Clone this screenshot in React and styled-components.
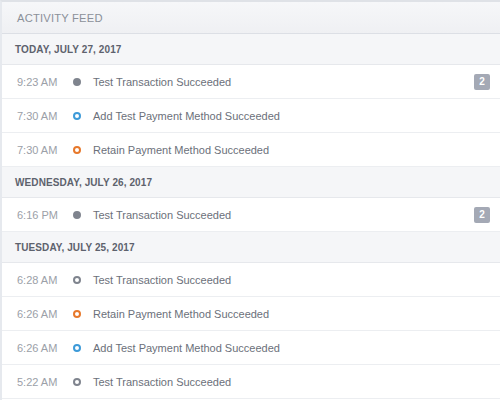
import styled, { createGlobalStyle, css } from "styled-components";

const GlobalStyle = createGlobalStyle`
  html, body {
    margin: 0;
    padding: 0;
    background: #ffffff;
  }
  body {
    font-family: "Liberation Sans", Arial, sans-serif;
    -webkit-font-smoothing: antialiased;
  }
`;

const Panel = styled.div`
  position: relative;
  width: 500px;
  height: 400px;
  overflow: hidden;
  border-top: 2px solid #dfe2e7;
  border-left: 2px solid #e6e9ee;
  box-sizing: border-box;
  background: #ffffff;
`;

const ActiveMarker = styled.span`
  position: absolute;
  left: -2px;
  top: 144px;
  width: 2px;
  height: 24px;
  background: #3f9be0;
`;

const Header = styled.div`
  height: 32px;
  display: flex;
  align-items: center;
  padding-left: 15px;
  background: linear-gradient(#f6f7f9, #eff0f3);
  border-bottom: 1px solid #dcdfe5;
  box-sizing: border-box;
  font-size: 11.2px;
  letter-spacing: 0.2px;
  color: #8b9099;
  text-transform: uppercase;
`;

const DayHeader = styled.div`
  height: 31px;
  display: flex;
  align-items: center;
  padding-left: 13px;
  background: #f5f6f8;
  border-bottom: 1px solid #e6e8ec;
  box-sizing: border-box;
  font-size: 10px;
  font-weight: bold;
  letter-spacing: 0.1px;
  color: #5d626d;
  text-transform: uppercase;
`;

const Row = styled.div`
  height: 34px;
  display: flex;
  align-items: center;
  padding: 0 10px 0 15px;
  border-bottom: 1px solid #eceef1;
  box-sizing: border-box;
  font-size: 11px;
`;

const Time = styled.span`
  width: 56px;
  color: #9ba0a8;
`;

const dotKinds = {
  solid: css`
    background: #7f848e;
    border-color: #7f848e;
  `,
  gray: css`
    border-color: #7f848e;
  `,
  blue: css`
    border-color: #3d9ad8;
  `,
  orange: css`
    border-color: #e7782b;
  `,
};

const Dot = styled.span`
  width: 8px;
  height: 8px;
  border-radius: 50%;
  border: 2px solid;
  box-sizing: border-box;
  margin-right: 12px;
  flex-shrink: 0;
  ${(props) => dotKinds[props.kind]};
`;

const Label = styled.span`
  flex: 1;
  color: #6b707a;
`;

const Badge = styled.span`
  width: 16px;
  height: 16px;
  display: flex;
  align-items: center;
  justify-content: center;
  border-radius: 2px;
  background: #a4a9b5;
  color: #ffffff;
  font-size: 10px;
  font-weight: bold;
`;

const days = [
  {
    date: "Today, July 27, 2017",
    events: [
      { time: "9:23 AM", kind: "solid", label: "Test Transaction Succeeded", count: 2 },
      { time: "7:30 AM", kind: "blue", label: "Add Test Payment Method Succeeded" },
      { time: "7:30 AM", kind: "orange", label: "Retain Payment Method Succeeded" },
    ],
  },
  {
    date: "Wednesday, July 26, 2017",
    events: [
      { time: "6:16 PM", kind: "solid", label: "Test Transaction Succeeded", count: 2 },
    ],
  },
  {
    date: "Tuesday, July 25, 2017",
    events: [
      { time: "6:28 AM", kind: "gray", label: "Test Transaction Succeeded" },
      { time: "6:26 AM", kind: "orange", label: "Retain Payment Method Succeeded" },
      { time: "6:26 AM", kind: "blue", label: "Add Test Payment Method Succeeded" },
      { time: "5:22 AM", kind: "gray", label: "Test Transaction Succeeded" },
    ],
  },
];

function App() {
  return (
    <>
      <GlobalStyle />
      <Panel>
        <ActiveMarker />
        <Header>Activity Feed</Header>
        {days.map((day) => (
          <div key={day.date}>
            <DayHeader>{day.date}</DayHeader>
            {day.events.map((ev, i) => (
              <Row key={i}>
                <Time>{ev.time}</Time>
                <Dot kind={ev.kind} />
                <Label>{ev.label}</Label>
                {ev.count && <Badge>{ev.count}</Badge>}
              </Row>
            ))}
          </div>
        ))}
      </Panel>
    </>
  );
}

export default App;
